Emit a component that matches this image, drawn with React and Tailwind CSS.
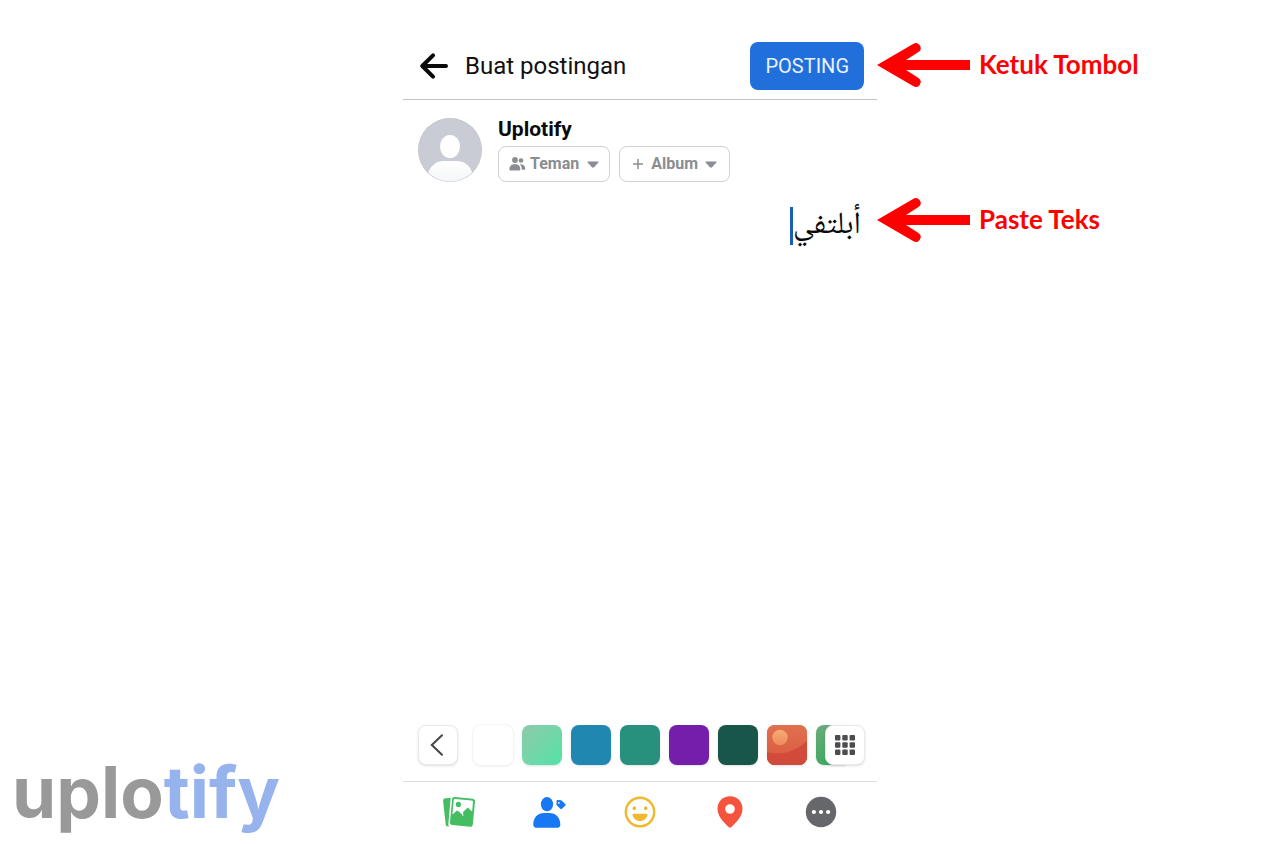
import React, { useState } from 'react';

const BackIcon = () => (
  <svg width="30" height="26" viewBox="0 0 30 26" fill="none" stroke="#0a0a0a" strokeWidth="4" strokeLinecap="round" strokeLinejoin="round">
    <path d="M14 2.300L3.300 13l10.700 10.700M4 13H27" />
  </svg>
);

const Avatar = () => (
  <svg width="64" height="64" viewBox="0 0 64 64" className="shrink-0">
    <defs>
      <clipPath id="avatar-clip">
        <circle cx="32" cy="32" r="31.5" />
      </clipPath>
      <linearGradient id="avatar-body" x1="0" y1="0" x2="0" y2="1">
        <stop offset="0" stopColor="#ffffff" />
        <stop offset="1" stopColor="#f4f5f6" />
      </linearGradient>
    </defs>
    <circle cx="32" cy="32" r="32" fill="#c3c5ca" />
    <g clipPath="url(#avatar-clip)">
      <rect width="64" height="64" fill="#c9ccd4" />
      <ellipse cx="32" cy="28.500" rx="10" ry="11.5" fill="#fff" />
      <path d="M9 58C12 47 19 43 26 43h12c8 0 15 4 17 15v8H9z" fill="url(#avatar-body)" />
    </g>
  </svg>
);

const FriendsIcon = () => (
  <svg width="17" height="16" viewBox="0 0 17 16" fill="#8a8d91">
    <circle cx="6" cy="4" r="2.900" />
    <circle cx="12" cy="4.500" r="2.300" />
    <path d="M.4 13.200C.4 10.200 2.600 8.300 5 8.300h1.600c2.600 0 4.700 1.900 4.700 4.900 0 .8-.6 1.400-1.300 1.400H1.600C.9 14.600.4 14 .4 13.200z" />
    <path d="M10.600 8.300c3.200-.5 5.700 1.500 5.700 4.100 0 .7-.5 1.300-1.200 1.300h-2.300c0-2.300-.7-4.100-2.200-5.400z" />
  </svg>
);

const PlusIcon = () => (
  <svg width="12" height="12" viewBox="0 0 12 12" stroke="#8a8d91" strokeWidth="1.500">
    <path d="M6 1v10M1 6h10" />
  </svg>
);

const CaretIcon = () => (
  <svg width="12" height="7" viewBox="0 0 12 7" fill="#8a8d91">
    <path d="M1 .5h10c.6 0 .8.600.4 1L7 6.200c-.6.6-1.400.6-2 0L.6 1.500C.2 1.100.4.500 1 .5z" />
  </svg>
);

const ArrowLeft = () => (
  <svg width="94" height="44" viewBox="0 0 94 44" fill="#ff0000" className="shrink-0">
    <path d="M0 22L36.500 .7a4.900 4.900 0 0 1 5 8.400L29 17h64v10H29l12.500 7.900a4.900 4.900 0 0 1-5 8.400z" />
  </svg>
);

const PhotoIcon = () => (
  <svg width="32" height="30" viewBox="0 0 32 30">
    <path d="M2.500 1.300L7.700.700 5.300 27.500c0 .8.300 1.400.8 2H5c-1.300 0-2.200-.8-2.300-2L.1 4C0 2.500.9 1.500 2.500 1.300z" fill="#45bd62" />
    <path d="M11.600.1l18 1.700c1.600.2 2.600 1.300 2.400 2.800l-2.200 22.800c-.2 1.500-1.300 2.400-2.800 2.300L9.400 28c-1.600-.1-2.500-1.300-2.400-2.800L9.100 2.300C9.200.8 10.200 0 11.600.1z" fill="#45bd62" />
    <path d="M11.900 1.900l16.900 1.600c.8.100 1.300.6 1.200 1.400l-.9 9.500-3.600-3.200c-.5-.5-1-.5-1.500 0l-3.500 3.300c-.3.300-.5.700-.4 1.100l.2 1.600c.1.600-.4 1.200-.8.500l-4.400-3.700c-.6-.5-1.200-.5-1.700 0l-4 3.600 1.300-14.500c.1-.8.500-1.200 1.200-1.200z" fill="#fff" />
    <path d="M19.300 17l1.600 2.300-1.600-.9z" fill="#fff" />
    <circle cx="15.400" cy="7.400" r="2.600" fill="#45bd62" />
  </svg>
);

const TagPeopleIcon = () => (
  <svg width="33" height="31" viewBox="0 0 33 31" fill="#1877f2">
    <ellipse cx="14" cy="7.200" rx="6.100" ry="7.100" />
    <path d="M.3 27.300C.3 20.500 5 16 11 16h5.600c6 0 10.700 4.500 10.700 11.300v.8c0 1.500-1 2.600-2.600 2.600H2.900c-1.500 0-2.600-1.100-2.600-2.600z" />
    <path fillRule="evenodd" d="M24.600 3.100l3.200.1c.5 0 .9.200 1.200.5l3.200 3.400c.5.500.5 1.200 0 1.700l-3.200 3c-.5.500-1.200.4-1.700 0L24 8.600c-.3-.3-.5-.7-.5-1.200l.1-3.300c0-.6.400-1 1-1zM25.900 4.900a.9.900 0 1 0 .01 1.800.9.900 0 0 0-.01-1.800z" />
  </svg>
);

const FeelingIcon = () => (
  <svg width="32" height="32" viewBox="0 0 32 32" fill="#f0b82d">
    <circle cx="16" cy="16" r="14.200" fill="none" stroke="#f0b82d" strokeWidth="2.400" />
    <ellipse cx="10.300" cy="12.300" rx="1.700" ry="2" />
    <ellipse cx="21.700" cy="12.300" rx="1.700" ry="2" />
    <path d="M9.400 17.800h13.200c.6 0 1 .4.900 1-.6 3.700-3.500 6.300-7.500 6.300s-6.900-2.600-7.500-6.300c-.1-.6.3-1 .9-1z" />
  </svg>
);

const LocationIcon = () => (
  <svg width="26" height="32" viewBox="0 0 26 32">
    <path fillRule="evenodd" fill="#f5533d" d="M13 .3C5.700.3.500 5.600.500 12.800c0 7.200 5.300 12.700 11.100 18.200.8.700 2 .7 2.800 0 5.800-5.500 11.100-11 11.100-18.200C25.500 5.600 20.300.3 13 .3zM13 8.200a4.800 4.800 0 1 1-.01 9.600A4.800 4.800 0 0 1 13 8.200z" />
  </svg>
);

const MoreIcon = () => (
  <svg width="32" height="32" viewBox="0 0 32 32">
    <circle cx="16" cy="16" r="15.200" fill="#65676b" />
    <circle cx="8.900" cy="16" r="2.100" fill="#fff" />
    <circle cx="16" cy="16" r="2.100" fill="#fff" />
    <circle cx="23.100" cy="16" r="2.100" fill="#fff" />
  </svg>
);

const SunsetArt = () => (
  <svg width="40" height="40" viewBox="0 0 40 40">
    <defs>
      <linearGradient id="sky" x1="0" y1="0" x2="0" y2="1">
        <stop offset="0" stopColor="#e0704f" />
        <stop offset="1" stopColor="#d9583f" />
      </linearGradient>
      <linearGradient id="sun" x1="0" y1="0" x2="0" y2="1">
        <stop offset="0" stopColor="#f5ad74" />
        <stop offset="1" stopColor="#ee8a5c" />
      </linearGradient>
    </defs>
    <rect width="40" height="40" fill="url(#sky)" />
    <circle cx="13" cy="12.500" r="7.800" fill="url(#sun)" />
    <path d="M0 27c14 4 28 0 40-11v24H0z" fill="#d24a39" />
  </svg>
);

const swatches = [
  { name: 'Putih', style: 'bg-white ring-1 ring-gray-100' },
  { name: 'Hijau muda', style: 'bg-linear-to-br from-[#8cc9a8] to-[#4ce3a9]' },
  { name: 'Biru', style: 'bg-[#2088b0]' },
  { name: 'Hijau laut', style: 'bg-[#28917e]' },
  { name: 'Ungu', style: 'bg-[#731fab]' },
  { name: 'Hijau tua', style: 'bg-[#18564a]' },
  { name: 'Senja', style: 'bg-[#d9583f]', art: SunsetArt },
  { name: 'Hijau', style: 'bg-linear-to-b from-[#6aab7b] to-[#3daa61]' }
];

const actions = [
  { name: 'Foto', icon: PhotoIcon },
  { name: 'Tandai orang', icon: TagPeopleIcon },
  { name: 'Perasaan', icon: FeelingIcon },
  { name: 'Lokasi', icon: LocationIcon },
  { name: 'Lainnya', icon: MoreIcon }
];

const notes = ['Ketuk Tombol', 'Paste Teks'];

const App = () => {
  const [text, setText] = useState('أبلتفي');

  return (
    <div className="flex min-h-screen bg-white font-[Roboto,sans-serif]">
      {/* Brand */}
      <div className="flex flex-1 items-end">
        <p className="pb-2 pl-3 font-[Inter,sans-serif] text-[71px] leading-[88px] font-bold text-[#999999]">
          uplo<span className="text-[#96b3ee]">tify</span>
        </p>
      </div>

      {/* Composer */}
      <main className="flex w-full max-w-[474px] flex-col">
        <header className="flex items-center border-b border-[#c4c4c4] pt-[42px] pr-[13px] pb-[9px] pl-4">
          <button aria-label="Kembali">
            <BackIcon />
          </button>
          <h1 className="ml-4 flex-1 text-2xl text-[#111111]">Buat postingan</h1>
          <button className="h-12 rounded-lg bg-[#216fdb] px-[15px] text-xl text-[#e9f1fd]">POSTING</button>
        </header>

        <section className="flex gap-4 px-[15px] pt-[18px]">
          <Avatar />
          <div>
            <h2 className="mb-1.5 text-[21px] leading-[22px] font-bold text-[#0a0a0a]">Uplotify</h2>
            <div className="flex gap-[9px]">
              <button className="flex h-9 items-center gap-1 rounded-lg border border-[#cfd1d5] px-[10px] font-bold text-[#8a8d91]">
                <FriendsIcon />
                Teman
                <span className="ml-1"><CaretIcon /></span>
              </button>
              <button className="flex h-9 items-center gap-[7px] rounded-lg border border-[#cfd1d5] px-3 font-bold text-[#8a8d91]">
                <PlusIcon />
                Album
                <CaretIcon />
              </button>
            </div>
          </div>
        </section>

        <div dir="rtl" className="flex flex-1 items-start px-4 pt-5">
          <div className="flex items-center">
            <input
              aria-label="Teks postingan"
              value={text}
              onChange={(e) => setText(e.target.value)}
              className="field-sizing-content h-12 font-['Noto_Naskh_Arabic','Noto_Sans_Arabic','DejaVu_Sans',sans-serif] text-[31px] text-[#0a0a0a] outline-none"
            />
            <span className="h-[38px] w-[3px] bg-[#1b5fb4]" />
          </div>
        </div>

        {/* Background picker */}
        <div className="flex border-b border-[#dcdcdc] pr-3 pb-4 pl-[15px]">
          <button aria-label="Tutup" className="flex size-10 shrink-0 items-center justify-center rounded-lg border border-[#e8e8ee] bg-white shadow">
            <svg width="16" height="22" viewBox="0 0 16 22" fill="none" stroke="#45464a" strokeWidth="2" strokeLinecap="round">
              <path d="M12 1.200L1.800 11l10.200 9.800" />
            </svg>
          </button>
          <div className="-my-1 ml-[11px] flex min-w-0 flex-1 gap-[9px] overflow-hidden py-1 pl-1">
            {swatches.map((swatch) => {
              const Art = swatch.art;
              return (
                <button key={swatch.name} aria-label={swatch.name} className={`size-10 shrink-0 overflow-hidden rounded-lg shadow-sm ${swatch.style}`}>
                  {Art && <Art />}
                </button>
              );
            })}
          </div>
          <button aria-label="Semua latar" className="relative -ml-5 flex size-10 shrink-0 items-center justify-center rounded-lg border border-[#e8e8ee] bg-white shadow">
            <svg width="20" height="20" viewBox="0 0 20 20" fill="#4b4c4f">
              {[0, 7.3, 14.6].map((y) => [0, 7.3, 14.6].map((x) => (
                <rect key={`${x}-${y}`} x={x} y={y} width="5.400" height="5.400" rx="1" />
              )))}
            </svg>
          </button>
        </div>

        <nav className="flex h-[62px] items-center px-[11px] pb-0.5">
          {actions.map((action) => {
            const Icon = action.icon;
            return (
              <button key={action.name} aria-label={action.name} className="flex flex-1 justify-center">
                <Icon />
              </button>
            );
          })}
        </nav>
      </main>

      {/* Notes */}
      <aside className="flex flex-1 flex-col gap-[111px] pt-[43px]">
        {notes.map((note) => (
          <div key={note} className="flex items-center gap-2">
            <ArrowLeft />
            <p className="pb-0.5 font-[Lato,sans-serif] text-[26px] leading-8 font-bold whitespace-nowrap text-[#ff0000]">{note}</p>
          </div>
        ))}
      </aside>
    </div>
  );
};

export default App;
